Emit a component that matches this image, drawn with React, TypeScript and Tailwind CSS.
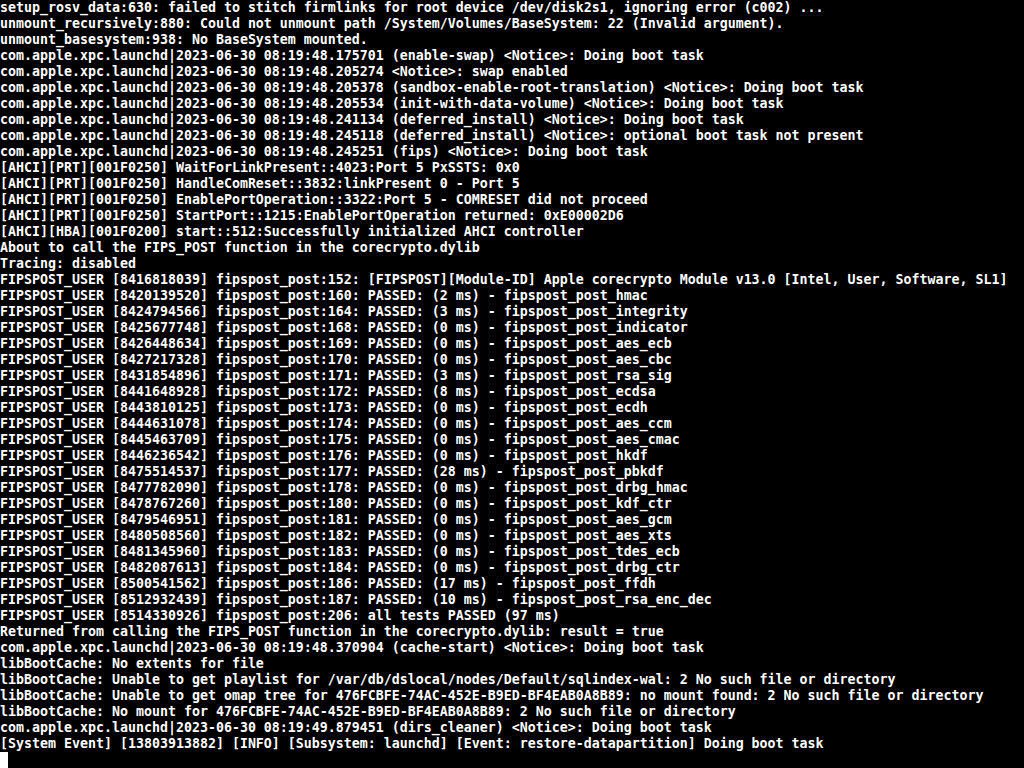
const lines = [
  "setup_rosv_data:630: failed to stitch firmlinks for root device /dev/disk2s1, ignoring error (c002) ...",
  "unmount_recursively:880: Could not unmount path /System/Volumes/BaseSystem: 22 (Invalid argument).",
  "unmount_basesystem:938: No BaseSystem mounted.",
  "com.apple.xpc.launchd|2023-06-30 08:19:48.175701 (enable-swap) <Notice>: Doing boot task",
  "com.apple.xpc.launchd|2023-06-30 08:19:48.205274 <Notice>: swap enabled",
  "com.apple.xpc.launchd|2023-06-30 08:19:48.205378 (sandbox-enable-root-translation) <Notice>: Doing boot task",
  "com.apple.xpc.launchd|2023-06-30 08:19:48.205534 (init-with-data-volume) <Notice>: Doing boot task",
  "com.apple.xpc.launchd|2023-06-30 08:19:48.241134 (deferred_install) <Notice>: Doing boot task",
  "com.apple.xpc.launchd|2023-06-30 08:19:48.245118 (deferred_install) <Notice>: optional boot task not present",
  "com.apple.xpc.launchd|2023-06-30 08:19:48.245251 (fips) <Notice>: Doing boot task",
  "[AHCI][PRT][001F0250] WaitForLinkPresent::4023:Port 5 PxSSTS: 0x0",
  "[AHCI][PRT][001F0250] HandleComReset::3832:linkPresent 0 - Port 5",
  "[AHCI][PRT][001F0250] EnablePortOperation::3322:Port 5 - COMRESET did not proceed",
  "[AHCI][PRT][001F0250] StartPort::1215:EnablePortOperation returned: 0xE00002D6",
  "[AHCI][HBA][001F0200] start::512:Successfully initialized AHCI controller",
  "About to call the FIPS_POST function in the corecrypto.dylib",
  "Tracing: disabled",
  "FIPSPOST_USER [8416818039] fipspost_post:152: [FIPSPOST][Module-ID] Apple corecrypto Module v13.0 [Intel, User, Software, SL1]",
  "FIPSPOST_USER [8420139520] fipspost_post:160: PASSED: (2 ms) - fipspost_post_hmac",
  "FIPSPOST_USER [8424794566] fipspost_post:164: PASSED: (3 ms) - fipspost_post_integrity",
  "FIPSPOST_USER [8425677748] fipspost_post:168: PASSED: (0 ms) - fipspost_post_indicator",
  "FIPSPOST_USER [8426448634] fipspost_post:169: PASSED: (0 ms) - fipspost_post_aes_ecb",
  "FIPSPOST_USER [8427217328] fipspost_post:170: PASSED: (0 ms) - fipspost_post_aes_cbc",
  "FIPSPOST_USER [8431854896] fipspost_post:171: PASSED: (3 ms) - fipspost_post_rsa_sig",
  "FIPSPOST_USER [8441648928] fipspost_post:172: PASSED: (8 ms) - fipspost_post_ecdsa",
  "FIPSPOST_USER [8443810125] fipspost_post:173: PASSED: (0 ms) - fipspost_post_ecdh",
  "FIPSPOST_USER [8444631078] fipspost_post:174: PASSED: (0 ms) - fipspost_post_aes_ccm",
  "FIPSPOST_USER [8445463709] fipspost_post:175: PASSED: (0 ms) - fipspost_post_aes_cmac",
  "FIPSPOST_USER [8446236542] fipspost_post:176: PASSED: (0 ms) - fipspost_post_hkdf",
  "FIPSPOST_USER [8475514537] fipspost_post:177: PASSED: (28 ms) - fipspost_post_pbkdf",
  "FIPSPOST_USER [8477782090] fipspost_post:178: PASSED: (0 ms) - fipspost_post_drbg_hmac",
  "FIPSPOST_USER [8478767260] fipspost_post:180: PASSED: (0 ms) - fipspost_post_kdf_ctr",
  "FIPSPOST_USER [8479546951] fipspost_post:181: PASSED: (0 ms) - fipspost_post_aes_gcm",
  "FIPSPOST_USER [8480508560] fipspost_post:182: PASSED: (0 ms) - fipspost_post_aes_xts",
  "FIPSPOST_USER [8481345960] fipspost_post:183: PASSED: (0 ms) - fipspost_post_tdes_ecb",
  "FIPSPOST_USER [8482087613] fipspost_post:184: PASSED: (0 ms) - fipspost_post_drbg_ctr",
  "FIPSPOST_USER [8500541562] fipspost_post:186: PASSED: (17 ms) - fipspost_post_ffdh",
  "FIPSPOST_USER [8512932439] fipspost_post:187: PASSED: (10 ms) - fipspost_post_rsa_enc_dec",
  "FIPSPOST_USER [8514330926] fipspost_post:206: all tests PASSED (97 ms)",
  "Returned from calling the FIPS_POST function in the corecrypto.dylib: result = true",
  "com.apple.xpc.launchd|2023-06-30 08:19:48.370904 (cache-start) <Notice>: Doing boot task",
  "libBootCache: No extents for file",
  "libBootCache: Unable to get playlist for /var/db/dslocal/nodes/Default/sqlindex-wal: 2 No such file or directory",
  "libBootCache: Unable to get omap tree for 476FCBFE-74AC-452E-B9ED-BF4EAB0A8B89: no mount found: 2 No such file or directory",
  "libBootCache: No mount for 476FCBFE-74AC-452E-B9ED-BF4EAB0A8B89: 2 No such file or directory",
  "com.apple.xpc.launchd|2023-06-30 08:19:49.879451 (dirs_cleaner) <Notice>: Doing boot task",
  "[System Event] [13803913882] [INFO] [Subsystem: launchd] [Event: restore-datapartition] Doing boot task",
];

export default function App() {
  return (
    <div className="h-[768px] w-[1024px] overflow-hidden bg-black font-['DejaVu_Sans_Mono',monospace] text-[13.29px] font-bold leading-[16px] text-white">
      {lines.map((line, i) => (
        <div key={i} className="h-4 whitespace-pre">
          {line}
        </div>
      ))}
      <div className="h-4 w-2 bg-white" />
    </div>
  );
}
